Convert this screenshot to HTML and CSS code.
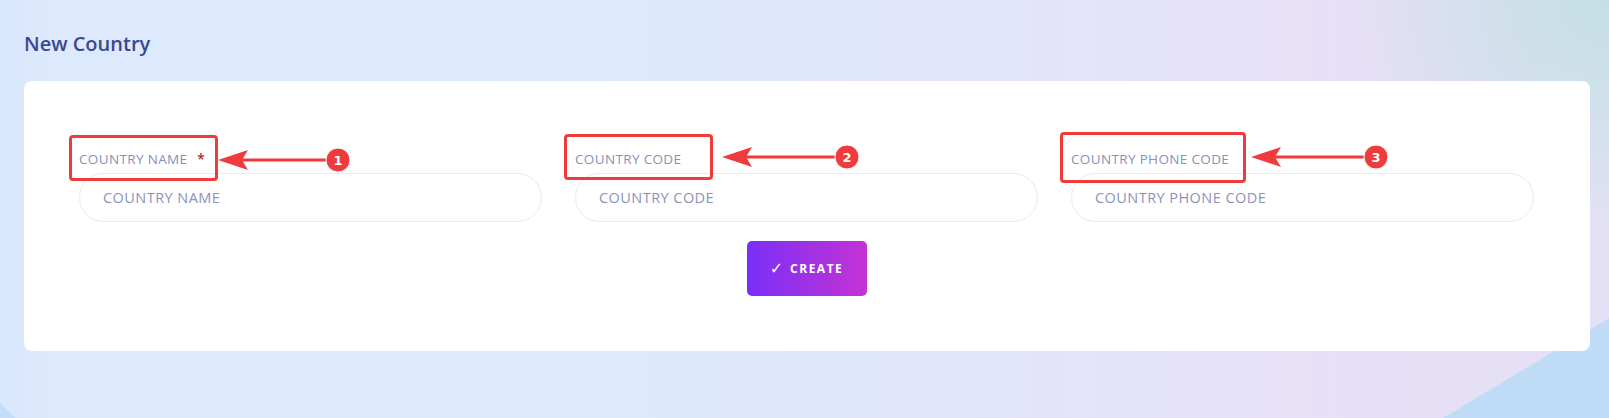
FILE: index.html
```html
<!DOCTYPE html>
<html lang="en">
<head>
<meta charset="utf-8">
<title>New Country</title>
<link rel="stylesheet" href="styles.css">
</head>
<body>
<main class="page">
  <h1 class="page-title">New Country</h1>
  <section class="card">
    <form class="form">
      <div class="fields">
        <div class="field field-1">
          <label class="field-label">COUNTRY NAME <span class="req">*</span></label>
          <input class="field-input" type="text" placeholder="COUNTRY NAME">
          <span class="mark mark-1"></span>
          <svg class="arrow arrow-1" width="134" height="26" viewBox="0 0 134 26">
            <line x1="22" y1="13" x2="120" y2="13" stroke="#ef3b3b" stroke-width="3"/>
            <polygon points="0,13 30,3 24,13 30,23" fill="#ef3b3b"/>
            <circle cx="120" cy="13" r="12" fill="#ef3b3b" stroke="#fff" stroke-width="1"/>
            <text x="120" y="18" text-anchor="middle" class="arrow-num">1</text>
          </svg>
        </div>
        <div class="field field-2">
          <label class="field-label">COUNTRY CODE</label>
          <input class="field-input" type="text" placeholder="COUNTRY CODE">
          <span class="mark mark-2"></span>
          <svg class="arrow arrow-2" width="140" height="26" viewBox="0 0 140 26">
            <line x1="22" y1="13" x2="125" y2="13" stroke="#ef3b3b" stroke-width="3"/>
            <polygon points="0,13 30,3 24,13 30,23" fill="#ef3b3b"/>
            <circle cx="125" cy="13" r="12" fill="#ef3b3b" stroke="#fff" stroke-width="1"/>
            <text x="125" y="18" text-anchor="middle" class="arrow-num">2</text>
          </svg>
        </div>
        <div class="field field-3">
          <label class="field-label">COUNTRY PHONE CODE</label>
          <input class="field-input" type="text" placeholder="COUNTRY PHONE CODE">
          <span class="mark mark-3"></span>
          <svg class="arrow arrow-3" width="140" height="26" viewBox="0 0 140 26">
            <line x1="22" y1="13" x2="125" y2="13" stroke="#ef3b3b" stroke-width="3"/>
            <polygon points="0,13 30,3 24,13 30,23" fill="#ef3b3b"/>
            <circle cx="125" cy="13" r="12" fill="#ef3b3b" stroke="#fff" stroke-width="1"/>
            <text x="125" y="18" text-anchor="middle" class="arrow-num">3</text>
          </svg>
        </div>
      </div>
      <div class="actions">
        <button class="btn-create" type="button"><span class="btn-check">✓</span>CREATE</button>
      </div>
    </form>
  </section>
</main>
</body>
</html>
```

FILE: styles.css
```css
html, body {
  margin: 0;
  padding: 0;
}

body {
  min-height: 100vh;
  font-family: "Open Sans", "Liberation Sans", sans-serif;
  background:
    linear-gradient(149deg, transparent 1101px, #bfdcf7 1102px),
    linear-gradient(225deg, transparent 1422px, #c4def8 1423px),
    radial-gradient(ellipse 260px 230px at 100% 0%, #c4e0e4 0%, rgba(196, 224, 228, 0.6) 45%, rgba(196, 224, 228, 0) 100%),
    linear-gradient(90deg, #d9e7fc 0%, #dde9fc 3%, #dee9fc 40%, #e3e4fa 65%, #e7dff7 85%, #e4e0f6 100%);
}

.page {
  padding: 29px 19px 67px 24px;
}

.page-title {
  margin: 0 0 22px;
  font-size: 20px;
  line-height: 30px;
  font-weight: 600;
  letter-spacing: 0;
  color: #3b4890;
}

.card {
  background: #ffffff;
  border-radius: 8px;
  padding: 69px 56px 55px 55px;
}

.fields {
  display: grid;
  grid-template-columns: repeat(3, 1fr);
  column-gap: 33px;
}

.field {
  position: relative;
  display: flex;
  flex-direction: column;
}

.field-label {
  font-size: 13.5px;
  line-height: 18px;
  letter-spacing: 0.35px;
  color: #8890b8;
  margin-bottom: 5px;
}

.req {
  color: #c0182c;
  margin-left: 6px;
  font-weight: 600;
}

.field-input {
  box-sizing: border-box;
  height: 49px;
  width: 100%;
  border: 1px solid #e9eaf2;
  border-radius: 25px;
  padding: 0 23px;
  font-family: inherit;
  font-size: 14.5px;
  letter-spacing: 0.45px;
  color: #5a6288;
  background: #fff;
  outline: none;
}

.field-input::placeholder {
  color: #8a93bb;
}

.actions {
  display: flex;
  justify-content: center;
  margin-top: 19px;
}

.btn-create {
  height: 55px;
  width: 120px;
  border: none;
  border-radius: 5px;
  background: linear-gradient(90deg, #7a2ff8 0%, #a331e4 55%, #c433d4 100%);
  color: #ffffff;
  font-family: inherit;
  font-size: 12px;
  font-weight: 700;
  letter-spacing: 1.5px;
  display: flex;
  align-items: center;
  justify-content: center;
  gap: 7px;
  cursor: pointer;
}

.btn-check {
  font-family: "DejaVu Sans", sans-serif;
  font-size: 16px;
  font-weight: 400;
  letter-spacing: 0;
}

/* annotation overlays */
.mark {
  position: absolute;
  top: -15px;
  left: -10px;
  height: 40px;
  border: 3px solid #ef3b3b;
  border-radius: 4px;
  pointer-events: none;
}

.mark-1 { width: 143px; }
.mark-2 { left: -11px; top: -16px; width: 143px; }
.mark-3 { left: -11px; top: -18px; width: 180px; height: 45px; }

.arrow {
  position: absolute;
  pointer-events: none;
  overflow: visible;
}

.arrow-1 { left: 139px; top: -3px; }
.arrow-2 { left: 147px; top: -6px; }
.arrow-3 { left: 180px; top: -6px; }

.arrow-num {
  font-family: "DejaVu Sans", sans-serif;
  font-size: 13px;
  font-weight: 700;
  fill: #ffffff;
}
```
